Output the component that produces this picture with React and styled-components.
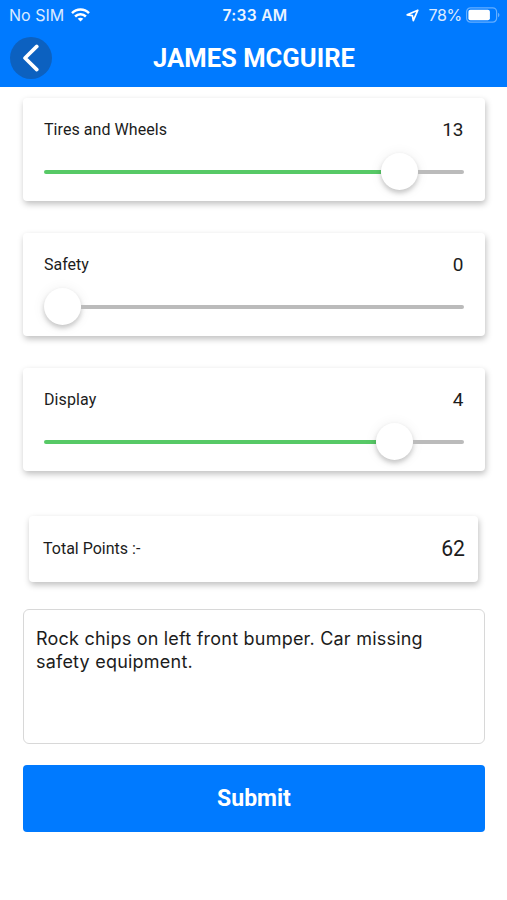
import React, { useState } from 'react';
import styled, { createGlobalStyle } from 'styled-components';

const GlobalStyle = createGlobalStyle`
  * {
    box-sizing: border-box;
  }

  body {
    margin: 0;
    background: #fff;
    color: #1c1c1c;
    font-family: Roboto, sans-serif;
  }
`;

const Screen = styled.div`
  height: 900px;
  overflow: hidden;
`;

const Header = styled.header`
  height: 87px;
  background: #007aff;
  color: #fff;
`;

const StatusBar = styled.div`
  display: grid;
  grid-template-columns: 1fr auto 1fr;
  align-items: center;
  height: 30px;
  padding: 0 7px 0 9px;
  font-family: Inter, sans-serif;
  font-size: 16px;
  line-height: 30px;
`;

const StatusGroup = styled.div`
  display: flex;
  align-items: center;
  justify-content: ${(props) => (props.$end ? 'flex-end' : 'flex-start')};
`;

const StatusText = styled.span`
  letter-spacing: ${(props) => props.$spacing || 0}px;
  opacity: 0.85;
`;

const Clock = styled.span`
  padding: 1px 0 0 1px;
  font-weight: 600;
  font-size: 15.6px;
  line-height: 29px;
  letter-spacing: 0.3px;
  opacity: 0.92;
`;

const WifiIcon = styled.svg`
  margin: 0 0 1px 7px;
`;

const LocationIcon = styled.svg`
  margin-right: 9px;
`;

const BatteryIcon = styled.svg`
  margin-left: 4px;
`;

const TitleBar = styled.div`
  display: grid;
  grid-template-columns: 42px 1fr 42px;
  align-items: center;
  height: 55px;
  padding: 0 9px 0 10px;
`;

const BackButton = styled.button`
  display: flex;
  align-items: center;
  justify-content: center;
  width: 42px;
  height: 42px;
  padding: 0 1px 0 0;
  border: none;
  border-radius: 50%;
  background: #0c61c0;
`;

const Title = styled.h1`
  margin: 0;
  text-align: center;
  font-size: 25.6px;
  font-weight: 700;
  line-height: 30px;
  white-space: nowrap;
`;

const Content = styled.main`
  display: flex;
  flex-direction: column;
  padding: 11px 22px 0 23px;
`;

const Card = styled.section`
  border-radius: 4px;
  background: #fff;
  box-shadow: 1px 3px 6px rgba(0, 0, 0, 0.25);
`;

const ScoreCard = styled(Card)`
  height: 103px;
  margin-bottom: 32.2px;
  padding: 19px 21.5px 0 21px;
`;

const TotalCard = styled(Card)`
  display: flex;
  align-items: center;
  justify-content: space-between;
  height: 66px;
  margin: 12.4px 7px 27px 6px;
  padding: 0 13px 1px 14px;
`;

const Row = styled.div`
  display: flex;
  align-items: center;
  justify-content: space-between;
  height: 24px;
`;

const Label = styled.span`
  font-size: 16px;
  letter-spacing: ${(props) => props.$spacing || 0}px;
`;

const Value = styled.span`
  font-size: ${(props) => props.$size || 19}px;
`;

const Slider = styled.div`
  display: flex;
  align-items: center;
  height: 37px;
  margin-top: 12px;
`;

const Track = styled.div`
  flex: ${(props) => (props.$filled ? 'none' : 1)};
  height: 4px;
  border-radius: ${(props) => (props.$filled ? '2px 0 0 2px' : '0 2px 2px 0')};
  background: ${(props) => (props.$filled ? '#57c966' : '#bbb')};
`;

const Thumb = styled.div`
  flex: none;
  width: 37px;
  height: 37px;
  border-radius: 50%;
  background: #fff;
  box-shadow: 0 3px 5px rgba(0, 0, 0, 0.2), 0 1px 14px rgba(0, 0, 0, 0.07);
`;

const Notes = styled.textarea`
  display: block;
  width: 100%;
  height: 135px;
  margin: 0 0 21.5px;
  padding: 17px 12px;
  border: 1.5px solid #d8d8d8;
  border-radius: 6px;
  outline: none;
  resize: none;
  color: #1c1c1c;
  font-family: Inter, sans-serif;
  font-size: 18px;
  line-height: 23px;
  letter-spacing: 0.22px;
`;

const SubmitButton = styled.button`
  height: 67px;
  padding: 0;
  border: none;
  border-radius: 4px;
  background: #007aff;
  color: #fff;
  font-family: Roboto, sans-serif;
  font-size: 23px;
  font-weight: 700;
`;

const scores = [
  { label: 'Tires and Wheels', spacing: 0.06, value: 13, fill: 337 },
  { label: 'Safety', value: 0, fill: 0 },
  { label: 'Display', spacing: 0.1, value: 4, fill: 332 },
];

function Score({ label, spacing, value, fill }) {
  return (
    <ScoreCard>
      <Row>
        <Label $spacing={spacing}>{label}</Label>
        <Value>{value}</Value>
      </Row>
      <Slider>
        <Track $filled style={{ width: fill }} />
        <Thumb />
        <Track />
      </Slider>
    </ScoreCard>
  );
}

export default function App() {
  const [notes, setNotes] = useState('Rock chips on left front bumper. Car missing safety equipment.');

  return (
    <Screen>
      <GlobalStyle />
      <Header>
        <StatusBar>
          <StatusGroup>
            <StatusText>No SIM</StatusText>
            <WifiIcon width="19" height="14" viewBox="0 0 19 14" fill="none" stroke="#fff" strokeWidth="2.5">
              <path d="M1 5.2C5.8.4 13.2.4 18 5.2" />
              <path d="M4.1 8.5c3-3 7.8-3 10.8 0" />
              <path d="M9.5 13.6 6.7 10.8c1.6-1.4 4-1.4 5.6 0z" fill="#fff" stroke="none" />
            </WifiIcon>
          </StatusGroup>
          <Clock>7:33 AM</Clock>
          <StatusGroup $end>
            <LocationIcon width="13" height="13" viewBox="0 0 13 13" fill="none" stroke="#fff" strokeWidth="1.7" strokeLinejoin="round">
              <path d="M11.8 1.2 1.2 5.8l5.2.9.9 5z" />
            </LocationIcon>
            <StatusText $spacing={-0.3}>78%</StatusText>
            <BatteryIcon width="34" height="16" viewBox="0 0 34 16" fill="none">
              <rect x="0.6" y="0.8" width="30" height="14.4" rx="4" stroke="#fff" strokeOpacity="0.4" strokeWidth="1.2" />
              <rect x="2.4" y="2.8" width="21.5" height="10.4" rx="2" fill="#fff" />
              <path d="M32.2 5.8c1.6.8 1.6 3.6 0 4.4z" fill="#fff" fillOpacity="0.5" />
            </BatteryIcon>
          </StatusGroup>
        </StatusBar>
        <TitleBar>
          <BackButton aria-label="Back">
            <svg width="18" height="28" viewBox="0 0 18 28" fill="none" stroke="#fff" strokeWidth="3.6" strokeLinecap="round" strokeLinejoin="round">
              <path d="M14.8 2.4 3 14l11.8 11.6" />
            </svg>
          </BackButton>
          <Title>JAMES MCGUIRE</Title>
        </TitleBar>
      </Header>
      <Content>
        {scores.map((score) => (
          <Score key={score.label} {...score} />
        ))}
        <TotalCard>
          <Label>Total Points :-</Label>
          <Value $size={21.2}>62</Value>
        </TotalCard>
        <Notes value={notes} onChange={(event) => setNotes(event.target.value)} />
        <SubmitButton type="submit">Submit</SubmitButton>
      </Content>
    </Screen>
  );
}
